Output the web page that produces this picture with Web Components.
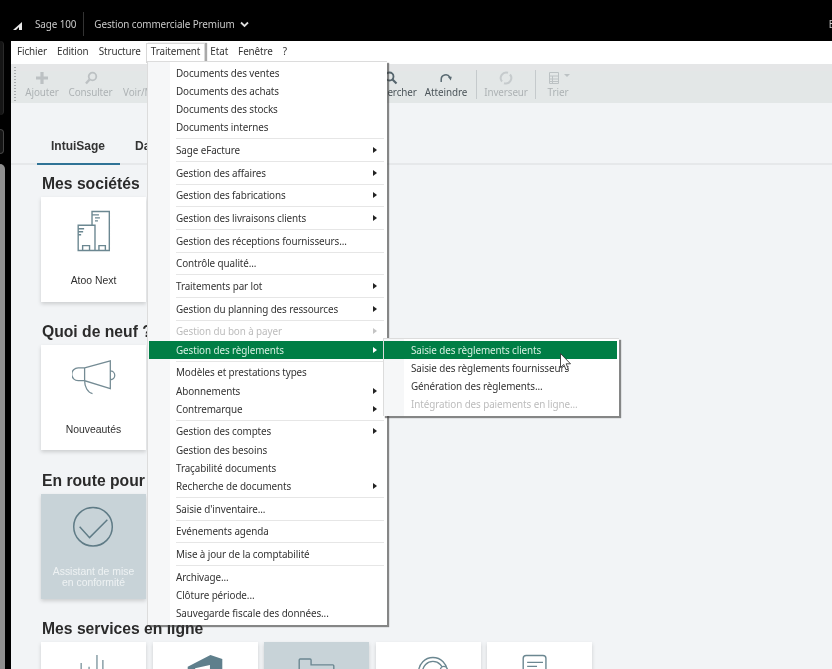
<!DOCTYPE html>
<html lang="fr">
<head>
<meta charset="utf-8">
<title>Sage 100</title>
<style>
  html, body { margin: 0; height: 669px; overflow: hidden; background: #000; }
  body { font-family: "Noto Sans", "Open Sans", sans-serif; }
  svg { display: block; }
</style>
</head>
<body>
<sage-app>
  <sage-titlebar></sage-titlebar>
  <sage-rail></sage-rail>
  <sage-menubar>
    <bar-item>Fichier</bar-item>
    <bar-item>Edition</bar-item>
    <bar-item>Structure</bar-item>
    <bar-item open>Traitement</bar-item>
    <bar-item>Etat</bar-item>
    <bar-item>Fenêtre</bar-item>
    <bar-item>?</bar-item>
  </sage-menubar>
  <sage-toolbar>
    <tool-item off style="--w:34px" label="Ajouter">
      <svg width="14" height="14" viewBox="0 0 14 14"><path d="M7 1v12M1 7h12" stroke="#bcc1c3" stroke-width="3.2"/></svg>
    </tool-item>
    <tool-item off style="--w:45px" label="Consulter">
      <svg width="14" height="14" viewBox="0 0 14 14" fill="none" stroke="#bcc1c3"><circle cx="8.500" cy="5.500" r="3.800" stroke-width="1.800"/><path d="M5.500 8.500L2 12.500" stroke-width="2.400"/></svg>
    </tool-item>
    <tool-item off style="--w:62px" label="Voir/Modifier">
      <svg width="14" height="14"></svg>
    </tool-item>
    <tool-gap style="--w:164px"></tool-gap>
    <tool-item style="--w:50px" label="Rechercher">
      <svg width="14" height="14" viewBox="0 0 14 14" fill="none" stroke="#55656d"><circle cx="5.500" cy="5.500" r="4" stroke-width="1.800"/><path d="M8.500 8.500L12.500 12.500" stroke-width="2.200"/></svg>
    </tool-item>
    <tool-item style="--w:42px" label="Atteindre">
      <svg width="14" height="14" viewBox="0 0 14 14" fill="none"><path d="M2.200 11V8.500a4.600 4.600 0 0 1 8.600-2.300" stroke="#5a6a72" stroke-width="1.500"/><path d="M8.800 5.800h4L11.800 9.500z" fill="#5a6a72"/></svg>
    </tool-item>
    <tool-sep></tool-sep>
    <tool-item off style="--w:40px" label="Inverseur">
      <svg width="14" height="14" viewBox="0 0 14 14" fill="none" stroke="#c6cbcd" stroke-width="2"><path d="M3 10.500A5.500 5.500 0 0 1 9 1.800"/><path d="M11 3.500A5.500 5.500 0 0 1 5 12.200"/></svg>
    </tool-item>
    <tool-sep></tool-sep>
    <tool-item off style="--w:26px" label="Trier">
      <svg width="24" height="14" viewBox="0 0 24 14"><path d="M3.500 1.500h9v11h-9zM3.500 5h9M3.500 8h9M3.500 10.500h9M6.500 5v7.500" fill="none" stroke="#bcc2c4"/><path d="M18 3h6l-3 3z" fill="#bcc2c4"/></svg>
    </tool-item>
  </sage-toolbar>
  <sage-home>
    <home-tabs>
      <home-tab active>IntuiSage</home-tab>
      <home-tab>Dashboard</home-tab>
    </home-tabs>
    <home-section title="Mes sociétés">
      <home-card>
        <svg slot="icon" width="44" height="44" viewBox="0 0 44 44" fill="none" stroke="#6b8791" stroke-width="1.400"><path d="M6 42V16.500h17V42zM20 16.500V2.500h17.500V42H23M6 20h6M6 23h5M6 26h3M20 6h7M23 9h5M23 12h3M10.500 42v-5h7v5M27 42v-5h6.500v5"/></svg>
        Atoo Next
      </home-card>
    </home-section>
    <home-section title="Quoi de neuf ?">
      <home-card>
        <svg slot="icon" width="44" height="44" viewBox="0 0 44 44" fill="none" stroke="#748b94" stroke-width="1.300"><path d="M12.500 11L38.500 4V32L12.500 24ZM12.500 11H6a6.500 6.500 0 0 0 0 13h6.500M38.500 14a4.500 4.500 0 0 1 0 9M12.500 24c0 6 3 12 8 13"/></svg>
        Nouveautés
      </home-card>
    </home-section>
    <home-section title="En route pour">
      <home-card selected>
        <svg slot="icon" width="44" height="44" viewBox="0 0 44 44" fill="none" stroke="#5f7b86" stroke-width="1.500"><circle cx="21" cy="21" r="19.500"/><path d="M7.500 21l10 11 18-18"/></svg>
        Assistant de mise<br>en conformité
      </home-card>
    </home-section>
    <home-section title="Mes services en ligne">
      <home-card>
        <svg slot="icon" width="44" height="44" viewBox="0 0 44 44" fill="none" stroke="#6b8791" stroke-width="1.200"><path d="M9 30V9M17 30V13M25 30V1M31 30V6"/></svg>
      </home-card>
      <home-card>
        <svg slot="icon" width="44" height="44" viewBox="0 0 44 44"><path d="M4.500 13L27.500 1 39.500 5V40L27.500 44 4.500 36Z M12 14.500V33L27 37V11Z" fill="#5f7f8c" fill-rule="evenodd"/></svg>
      </home-card>
      <home-card selected>
        <svg slot="icon" width="44" height="44" viewBox="0 0 44 44" fill="none" stroke="#6b8791" stroke-width="1.400"><path d="M4 40V6a1 1 0 0 1 1-1h10a1 1 0 0 1 1 1v5h22a1 1 0 0 1 1 1v28z"/></svg>
      </home-card>
      <home-card>
        <svg slot="icon" width="44" height="44" viewBox="0 0 44 44" fill="none" stroke="#6b8791" stroke-width="1.400"><circle cx="27" cy="18" r="14.500"/><circle cx="27" cy="18" r="10.500"/><circle cx="38" cy="16" r="3.500" fill="#fff"/></svg>
      </home-card>
      <home-card>
        <svg slot="icon" width="44" height="44" viewBox="0 0 44 44" fill="none" stroke="#6b8791" stroke-width="1.400"><rect x="5" y="1.500" width="23" height="24" rx="3"/><path d="M9 8.500h16M9 12.500h10"/></svg>
      </home-card>
    </home-section>
  </sage-home>

  <sage-menu style="left:147px;top:61px;width:240px">
    <menu-item>Documents des ventes</menu-item>
    <menu-item>Documents des achats</menu-item>
    <menu-item>Documents des stocks</menu-item>
    <menu-item>Documents internes</menu-item>
    <menu-sep></menu-sep>
    <menu-item arrow>Sage eFacture</menu-item>
    <menu-sep></menu-sep>
    <menu-item arrow>Gestion des affaires</menu-item>
    <menu-sep></menu-sep>
    <menu-item arrow>Gestion des fabrications</menu-item>
    <menu-sep></menu-sep>
    <menu-item arrow>Gestion des livraisons clients</menu-item>
    <menu-sep></menu-sep>
    <menu-item>Gestion des réceptions fournisseurs...</menu-item>
    <menu-sep></menu-sep>
    <menu-item>Contrôle qualité...</menu-item>
    <menu-sep></menu-sep>
    <menu-item arrow>Traitements par lot</menu-item>
    <menu-sep></menu-sep>
    <menu-item arrow>Gestion du planning des ressources</menu-item>
    <menu-sep></menu-sep>
    <menu-item arrow disabled>Gestion du bon à payer</menu-item>
    <menu-item arrow active>Gestion des règlements</menu-item>
    <menu-sep></menu-sep>
    <menu-item>Modèles et prestations types</menu-item>
    <menu-item arrow>Abonnements</menu-item>
    <menu-item arrow>Contremarque</menu-item>
    <menu-sep></menu-sep>
    <menu-item arrow>Gestion des comptes</menu-item>
    <menu-item>Gestion des besoins</menu-item>
    <menu-item>Traçabilité documents</menu-item>
    <menu-item arrow>Recherche de documents</menu-item>
    <menu-sep></menu-sep>
    <menu-item>Saisie d'inventaire...</menu-item>
    <menu-sep></menu-sep>
    <menu-item>Evénements agenda</menu-item>
    <menu-sep></menu-sep>
    <menu-item>Mise à jour de la comptabilité</menu-item>
    <menu-sep></menu-sep>
    <menu-item>Archivage...</menu-item>
    <menu-item>Clôture période...</menu-item>
    <menu-item>Sauvegarde fiscale des données...</menu-item>
  </sage-menu>
  <sage-menu sub style="left:383px;top:338px;width:236px">
    <menu-item active>Saisie des règlements clients</menu-item>
    <menu-item>Saisie des règlements fournisseurs</menu-item>
    <menu-item>Génération des règlements...</menu-item>
    <menu-item disabled>Intégration des paiements en ligne...</menu-item>
  </sage-menu>
  <sage-cursor></sage-cursor>
</sage-app>

<script>
// every element here is only markup + styles, so one small factory is enough
const component = (tag, html) => {
  const tpl = document.createElement('template');
  tpl.innerHTML = html;
  customElements.define(tag, class extends HTMLElement {
    constructor() {
      super();
      this.attachShadow({ mode: 'open' });
      this.shadowRoot.appendChild(tpl.content.cloneNode(true));
    }
  });
};

component('sage-app', `
  <style>
    :host {
      display: grid; position: relative; width: 832px; height: 669px; overflow: hidden;
      grid-template-columns: 11px 1fr;
      grid-template-rows: 41px 23px 39px 1fr;
      grid-template-areas: "title title" "rail bar" "rail tools" "rail home";
      background: #000; filter: blur(.3px);
      --ui-size: 9.9px; --ui-track: -.1px;
    }
  </style>
  <slot></slot>`);

component('sage-titlebar', `
  <style>
    :host {
      grid-area: title; display: flex; align-items: center; background: #000; color: #c9c9c9;
      font-size: var(--ui-size); letter-spacing: var(--ui-track); padding: 7px 0 0 13px; box-sizing: border-box;
    }
    .app { margin-left: 12px; padding-right: 7px; border-right: 1px solid #333; line-height: 24px; }
    .mod { margin-left: 10px; }
    svg { margin-left: 5px; }
    .edge { margin-left: auto; margin-right: -3px; }
  </style>
  <svg style="margin:4px 0 0" width="10" height="8" viewBox="0 0 10 8"><path d="M0 8L9 0V8H6V5L3 8z" fill="#e8e8e8"/></svg>
  <span class="app">Sage 100</span>
  <span class="mod">Gestion commerciale Premium</span>
  <svg width="9" height="7" viewBox="0 0 9 7"><path d="M1 1.500L4.500 5 8 1.500" fill="none" stroke="#ddd" stroke-width="1.800"/></svg>
  <span class="edge">B</span>`);

component('sage-rail', `
  <style>
    :host { grid-area: rail; display: flex; flex-direction: column; gap: 8px; background: #000; }
    i { display: block; width: 4px; box-sizing: border-box; border-radius: 0 4px 4px 0; }
    .a { height: 74px; background: #151515; border-right: 1px solid #2a2a2a; }
    .b { height: 25px; margin-top: 6px; background: #151515; border: 1px solid #444; border-left: 0; }
    .c { flex: 1; width: 5px; margin-top: 2px; background: #8f8f8f; border-radius: 0 5px 0 0; }
  </style>
  <i class="a"></i><i class="b"></i><i class="c"></i>`);

component('sage-menubar', `
  <style>
    :host {
      grid-area: bar; display: flex; gap: 10px; padding: 0 0 0 6px; background: #fff; color: #333;
      font-size: var(--ui-size); letter-spacing: var(--ui-track); line-height: 21px;
    }
  </style>
  <slot></slot>`);

component('bar-item', `
  <style>
    :host { display: block; position: relative; }
    :host([open])::before {
      content: ""; position: absolute; left: -5px; right: -5px; top: 2px; height: 19px;
      border: 1px solid #d8d8d8; border-bottom: 0; box-shadow: 2px 0 1px #a9a9a9; background: #fff;
    }
    span { position: relative; }
  </style>
  <span><slot></slot></span>`);

component('sage-toolbar', `
  <style>
    :host {
      grid-area: tools; display: flex; gap: 9px; padding-left: 14px; position: relative;
      background: linear-gradient(#e5e6e7 7px, #e3e7e7 7px);
    }
    :host::before {
      content: ""; position: absolute; left: 3px; top: 3px; bottom: 2px; width: 2px;
      background: repeating-linear-gradient(#a9adaf 0 1px, transparent 1px 3px);
    }
  </style>
  <slot></slot>`);

component('tool-item', `
  <style>
    :host {
      display: flex; flex-direction: column; align-items: center; width: var(--w); padding-top: 7px;
      color: #4b5459; font-size: var(--ui-size); letter-spacing: var(--ui-track); line-height: 14px; white-space: nowrap;
    }
    :host([off]) { color: #adb2b4; }
  </style>
  <slot></slot>
  <span id="l"></span>`);

component('tool-gap', `
  <style>:host { display: block; width: var(--w); }</style>`);

component('tool-sep', `
  <style>:host { display: block; width: 1px; margin: 6px 0 4px; background: #c5cacc; }</style>`);

component('sage-home', `
  <style>
    :host { grid-area: home; display: block; background: #f2f4f6; padding: 24px 0 0 26px; overflow: hidden; min-height: 0; }
  </style>
  <slot></slot>`);

component('home-tabs', `
  <style>
    :host {
      display: flex; gap: 15px; height: 38px; box-sizing: border-box; margin: 0 0 7px -26px; padding-left: 26px;
      box-shadow: 0 -2px 0 #e6e8ea inset;
    }
  </style>
  <slot></slot>`);

component('home-tab', `
  <style>
    :host { display: block; box-sizing: border-box; height: 38px; font: 700 12px/38px "Liberation Sans", Arial, sans-serif; color: #333; }
    :host([active]) { width: 83px; padding-left: 14px; box-shadow: 0 -2px 0 #2f7396 inset; }
  </style>
  <slot></slot>`);

component('home-section', `
  <style>
    :host { display: block; margin: 0 0 18.3px 4px; }
    h2 { margin: 0 0 1px; font: 700 15.7px/24px "Liberation Sans", Arial, sans-serif; color: #2b2b2b; white-space: nowrap; padding-left: 1px; }
    .row { display: flex; gap: 6.5px; }
  </style>
  <h2></h2>
  <div class="row"><slot></slot></div>`);

component('home-card', `
  <style>
    :host {
      display: flex; flex-direction: column; align-items: center; box-sizing: border-box;
      width: 105px; height: 105px; flex: none; padding-top: 12px; background: #fff;
      box-shadow: 0 2px 4px rgba(0,0,0,.16); color: #2f2f2f;
      font: 10.4px/11px "Liberation Sans", Arial, sans-serif; text-align: center;
    }
    :host([selected]) { background: #c8d3d8; color: #eef2f3; }
    .label { height: 43px; margin-top: 7px; display: flex; align-items: center; }
  </style>
  <slot name="icon"></slot>
  <div class="label"><div><slot></slot></div></div>`);

component('sage-menu', `
  <style>
    :host {
      position: absolute; z-index: 2; box-sizing: border-box; display: block; padding: 1.6px 3px 2.4px 1px;
      background: linear-gradient(to right, #f6f7f8 22px, #fff 22px);
      border: 1px solid #dcdcdc; border-width: 1px 0 0 1px;
      box-shadow: 2px 2px 1px rgba(60,60,60,.6); color: #333;
      font-size: var(--ui-size); letter-spacing: var(--ui-track);
    }
    :host([sub]) { z-index: 3; padding: 1.6px 2px 2.4px 0; background: linear-gradient(to right, #f6f7f8 20px, #fff 20px); }
  </style>
  <slot></slot>`);

component('menu-item', `
  <style>
    :host { display: flex; align-items: center; justify-content: space-between; height: 18.2px; padding: 0 7px 0 27px; white-space: nowrap; }
    :host([disabled]) { color: #bcbcbc; }
    :host([active]) { background: #007e45; color: #d5efe1; }
    i { display: none; border-left: 4px solid #222; border-top: 3.500px solid transparent; border-bottom: 3.500px solid transparent; }
    :host([arrow]) i { display: block; }
    :host([arrow][disabled]) i { border-left-color: #c4c4c4; }
    :host([arrow][active]) i { border-left-color: #fff; }
  </style>
  <span><slot></slot></span><i></i>`);

component('menu-sep', `
  <style>
    :host { display: block; height: 4.5px; margin-left: 27px; position: relative; }
    :host::after { content: ""; position: absolute; left: 0; right: 0; top: 2px; height: 1px; background: #e6e6e6; }
  </style>`);

component('sage-cursor', `
  <style>:host { position: absolute; z-index: 4; left: 560px; top: 353px; }</style>
  <svg width="11" height="18" viewBox="0 0 11 18"><path d="M.5.500V14.500L3.800 11.500 6 16.800 8.300 15.800 6.100 10.800H10.500Z" fill="#fff" stroke="#333" stroke-width=".9"/></svg>`);

// labels and headings come in as attributes
document.querySelectorAll('tool-item').forEach(el => {
  el.shadowRoot.getElementById('l').textContent = el.getAttribute('label');
});
document.querySelectorAll('home-section').forEach(el => {
  el.shadowRoot.querySelector('h2').textContent = el.getAttribute('title');
});
</script>
</body>
</html>
